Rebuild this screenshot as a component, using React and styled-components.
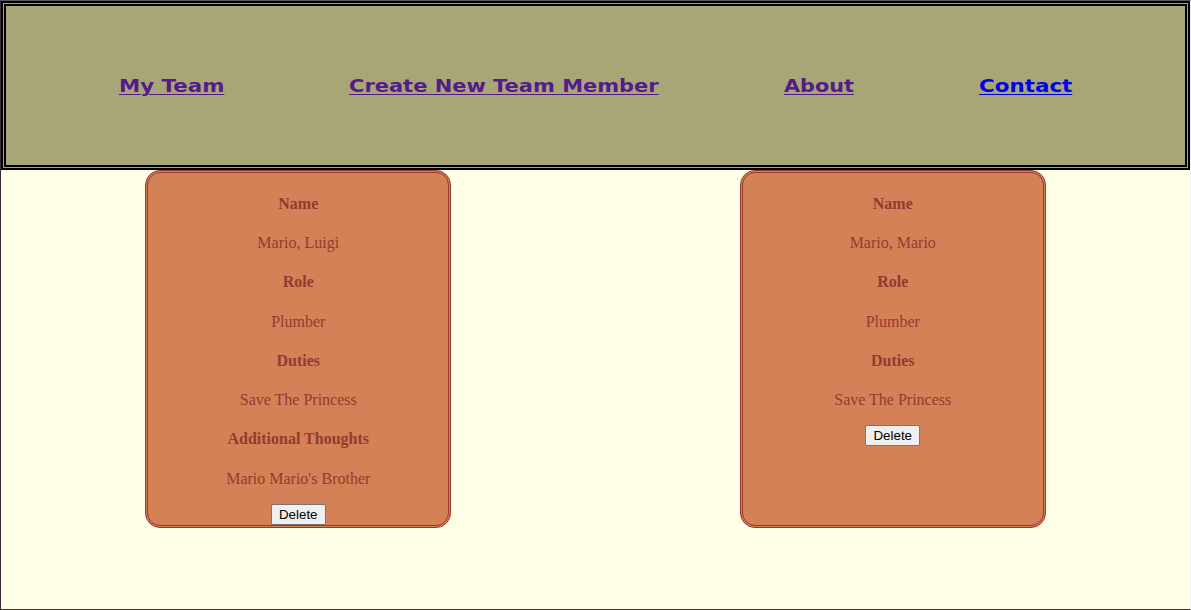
import React from 'react';
import styled, { createGlobalStyle } from 'styled-components';

const GlobalStyle = createGlobalStyle`
  * { box-sizing: border-box; }
  body { margin: 0; background: #ffffe8; }
`;

const Page = styled.div`
  height: 610px;
  overflow: hidden;
  background: #ffffe8;
  border-style: solid;
  border-width: 1px;
  border-color: #555b5b #efeff2 #4b3d2a #3e2932;
`;

const Header = styled.nav`
  height: 169px;
  display: flex;
  align-items: center;
  justify-content: center;
  gap: 125px;
  background: #a8a676;
  border: 5px double #000;
`;

const NavLink = styled.a`
  width: ${(p) => p.$width}px;
  color: ${(p) => (p.$visited ? '#551a8b' : '#0000ee')};
  font: bold 18px/24px 'DejaVu Sans', sans-serif;
  white-space: nowrap;
  text-decoration: none;
`;

const Label = styled.span`
  display: inline-block;
  transform: scaleX(${(p) => p.$stretch});
  transform-origin: left center;
  text-decoration: underline;
  text-decoration-thickness: 1px;
  text-underline-offset: 2px;
`;

const Team = styled.main`
  display: grid;
  grid-template-columns: 1fr 1fr;
  justify-items: center;
`;

const Card = styled.section`
  width: 306px;
  height: 358px;
  background: #d48157;
  color: #943a2f;
  border: 3px double #943a2f;
  border-radius: 15px;
  padding-top: 0.6px;
  font: 16px/18px 'Liberation Serif', serif;
  text-align: center;
`;

const Heading = styled.h4`
  margin: 21.25px 0;
  font-size: 16px;
`;

const Value = styled.p`
  margin: 21.25px 0;
`;

const DeleteButton = styled.button`
  display: block;
  width: 55px;
  height: 21px;
  margin: -5.2px auto 0;
  padding: 0;
  border: 1px solid #767676;
  border-radius: 2px;
  background: #efefef;
  color: #000;
  font: 13.333px 'Liberation Sans', Arial, sans-serif;
`;

const links = [
  { text: 'My Team', width: 105, stretch: 1.185, visited: true },
  { text: 'Create New Team Member', width: 310, stretch: 1.165, visited: true },
  { text: 'About', width: 70, stretch: 1.155, visited: true },
  { text: 'Contact', width: 94, stretch: 1.19, visited: false },
];

const members = [
  [['Name', 'Mario, Luigi'], ['Role', 'Plumber'], ['Duties', 'Save The Princess'], ['Additional Thoughts', "Mario Mario's Brother"]],
  [['Name', 'Mario, Mario'], ['Role', 'Plumber'], ['Duties', 'Save The Princess']],
];

export default function App() {
  return (
    <Page>
      <GlobalStyle />
      <Header>
        {links.map((l) => (
          <NavLink key={l.text} href="#" $width={l.width} $visited={l.visited}>
            <Label $stretch={l.stretch}>{l.text}</Label>
          </NavLink>
        ))}
      </Header>
      <Team>
        {members.map((fields, i) => (
          <Card key={i}>
            {fields.map(([title, value]) => (
              <React.Fragment key={title}>
                <Heading>{title}</Heading>
                <Value>{value}</Value>
              </React.Fragment>
            ))}
            <DeleteButton>Delete</DeleteButton>
          </Card>
        ))}
      </Team>
    </Page>
  );
}
